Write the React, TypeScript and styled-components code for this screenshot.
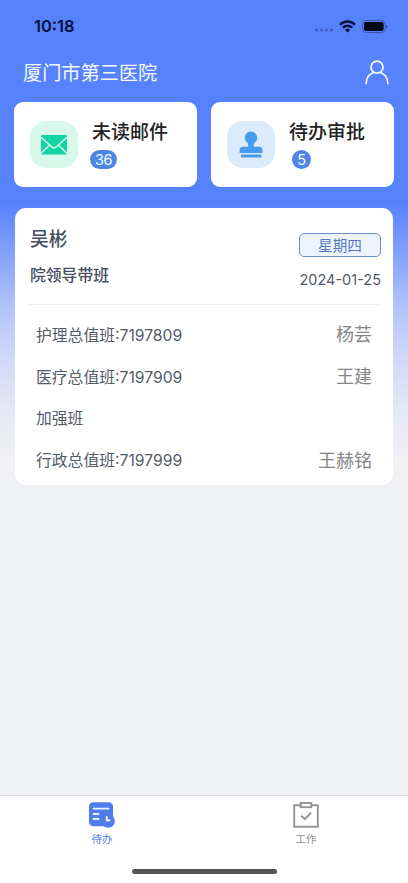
import React from "react";
import styled, { createGlobalStyle } from "styled-components";

const GlobalStyle = createGlobalStyle`
  * { box-sizing: border-box; }
  html, body { margin: 0; padding: 0; }
  body { font-family: Inter, "Noto Sans CJK SC", sans-serif; }
  h1, h2, p { margin: 0; font-weight: inherit; }
  svg { display: block; flex: none; }
`;

const Screen = styled.div`
  display: flex;
  flex-direction: column;
  width: 100%;
  height: 883px;
  overflow: hidden;
  white-space: nowrap;
  background: linear-gradient(
    180deg,
    #5682fd 0,
    #5682fd 203px,
    #7d9cfb 245px,
    #b0c2fa 305px,
    #d0daf8 360px,
    #e4e8f6 410px,
    #f0f1f5 460px
  );
`;

const StatusBar = styled.div`
  display: flex;
  align-items: center;
  justify-content: space-between;
  height: 52px;
  padding: 0 20px 0 34px;
`;

const Clock = styled.span`
  font-size: 16.5px;
  font-weight: 600;
  line-height: 20px;
  color: #08103d;
`;

const StatusIcons = styled.div`
  display: flex;
  align-items: center;
  gap: 6px;
`;

const Header = styled.header`
  display: flex;
  align-items: center;
  justify-content: space-between;
  height: 50px;
  padding: 0 18px 8px 23px;
`;

const HospitalName = styled.h1`
  font-size: 19.2px;
  line-height: 28px;
  color: #f4faff;
`;

const Shortcuts = styled.div`
  display: grid;
  grid-template-columns: 1fr 1fr;
  gap: 14px;
  height: 85px;
  margin: 0 14px;
`;

const ShortcutCard = styled.div`
  display: flex;
  align-items: flex-start;
  border-radius: 9px;
  background: #fff;
  padding: 19px 0 0 16px;
`;

const IconTile = styled.div<{ $bg: string }>`
  display: flex;
  align-items: center;
  justify-content: center;
  width: 48px;
  height: 47px;
  border-radius: 16px;
  background: ${(p) => p.$bg};
`;

const ShortcutText = styled.div`
  display: flex;
  flex-direction: column;
  align-items: flex-start;
  margin: -2px 0 0 12px;
`;

const ShortcutTitle = styled.h2`
  margin-left: 2px;
  font-size: 19px;
  font-weight: 500;
  line-height: 28px;
  color: #222;
`;

const Badge = styled.span<{ $shift?: number }>`
  min-width: 19px;
  height: 19px;
  margin: 3px 0 0 ${(p) => p.$shift ?? 0}px;
  padding: 0 5px;
  border-radius: 10px;
  background: #4f86e6;
  color: #f2fbff;
  font-size: 14.5px;
  line-height: 20px;
  letter-spacing: -0.4px;
  text-align: center;
`;

const DutyCard = styled.section`
  height: 277px;
  margin: 21px 15px 0;
  padding: 0 12px 0 13px;
  border-radius: 11px;
  background: #fff;
`;

const DutyHead = styled.div`
  display: flex;
  justify-content: space-between;
  height: 97px;
  padding: 0 0 0 2px;
  border-bottom: 1px solid #ebecee;
`;

const Leader = styled.div`
  padding-top: 18px;
  color: #454d60;
`;

const LeaderName = styled.h2`
  font-size: 18.8px;
  font-weight: 500;
  line-height: 28px;
`;

const LeaderRole = styled.p`
  margin-top: 10px;
  font-size: 15.8px;
  font-weight: 500;
  line-height: 24px;
`;

const DateColumn = styled.div`
  display: flex;
  flex-direction: column;
  align-items: flex-end;
  padding-top: 25px;
`;

const WeekTag = styled.span`
  width: 82px;
  height: 24px;
  border: 1px solid #6d8ccb;
  border-radius: 5px;
  background: #edf4ff;
  color: #5478c0;
  font-size: 14.6px;
  line-height: 24px;
  text-align: center;
`;

const DateText = styled.span`
  margin-top: 13px;
  font-size: 14.5px;
  line-height: 20px;
  color: #535a66;
`;

const DutyList = styled.div`
  padding-top: 10px;
`;

const DutyRow = styled.div`
  display: flex;
  align-items: center;
  justify-content: space-between;
  height: 41.8px;
  padding: 0 9px 0 8px;
  font-size: 15.8px;
  color: #535b68;
`;

const Shift = styled.span`
  display: flex;
  align-items: baseline;
  line-height: 24px;
`;

const Phone = styled.span`
  font-size: 15.7px;
`;

const Person = styled.span`
  font-size: 18px;
  line-height: 24px;
  padding-bottom: 1px;
  color: #858585;
`;

const Footer = styled.nav`
  display: grid;
  grid-template-columns: 1fr 1fr;
  grid-template-rows: 73px 6px;
  height: 88px;
  margin-top: auto;
  border-top: 1px solid #dcdde1;
  background: #fff;
`;

const Tab = styled.div<{ $active?: boolean }>`
  display: flex;
  flex-direction: column;
  align-items: center;
  gap: 4px;
  padding-top: 6px;
  color: ${(p) => (p.$active ? "#4f7ce6" : "#8e8e8e")};
  font-size: 10.5px;
  line-height: 16px;
`;

const HomeBar = styled.div`
  grid-column: 1 / 3;
  justify-self: center;
  width: 145px;
  height: 5px;
  border-radius: 3px;
  background: #555;
`;

const SignalIcon = () => (
  <svg width="18" height="18" viewBox="0 0 18 18" fill="#3c5bb8">
    {[1.6, 6.6, 11.6, 16.4].map((x) => (
      <circle key={x} cx={x} cy="13" r="1.4" />
    ))}
  </svg>
);

const WifiIcon = () => (
  <svg width="17" height="13" viewBox="0 0 17 13" fill="none" stroke="#07103f" strokeWidth="2.3">
    <path d="M1 4.7C5.2.4 11.8.4 16 4.7" />
    <path d="M3.8 7.7c2.6-2.6 6.8-2.6 9.4 0" />
    <path d="M5.9 9.7c1.5-1.4 3.7-1.4 5.2 0L8.5 12.5z" fill="#07103f" stroke="none" />
  </svg>
);

const BatteryIcon = () => (
  <svg width="26" height="13" viewBox="0 0 26 13">
    <rect x=".5" y=".5" width="22.6" height="12" rx="3.4" fill="none" stroke="#3958ad" />
    <rect x="2" y="2" width="19.6" height="9" rx="1.8" fill="#030617" />
    <path d="M24.2 4.7c1.6.5 1.6 3.1 0 3.6z" fill="#26418f" />
  </svg>
);

const UserIcon = () => (
  <svg width="26" height="26" viewBox="0 0 26 26" fill="none" stroke="#f5fbff" strokeWidth="1.7" strokeLinecap="round">
    <circle cx="13" cy="7.2" r="6" />
    <path d="M2.2 23.4c0-5.2 3-9.2 7.2-10.9M16.6 12.5c4.2 1.7 7.2 5.7 7.2 10.9" />
  </svg>
);

const MailIcon = () => (
  <svg width="26" height="20" viewBox="0 0 26 20">
    <rect x="0" y="0" width="26" height="19.4" rx="1.2" fill="#15d4a4" />
    <path
      d="M0 2.2 10.6 11.8q2.4 1.9 4.8 0L26 2.2M0 18.4 8.6 10M26 18.4 17.4 10"
      fill="none"
      stroke="#d0f7e9"
      strokeWidth="1.5"
    />
  </svg>
);

const StampIcon = () => (
  <svg width="24" height="27" viewBox="0 0 24 27" fill="#439cec">
    <path d="M12 .5a6.2 6.2 0 0 1 3.6 11.2c-1.1.9-1 2.7-.6 4.1h5.2c2.1 0 3.2 1.4 3.2 3.2v2.9H.6V19c0-1.8 1.1-3.2 3.2-3.2H9c.4-1.4.5-3.2-.6-4.1A6.2 6.2 0 0 1 12 .5z" />
    <rect x="2" y="23.5" width="20.5" height="2.9" rx=".4" />
  </svg>
);

const TodoIcon = () => (
  <svg width="26" height="26" viewBox="0 0 26 26">
    <rect x="0" y=".3" width="24" height="24" rx="4.2" fill="#4f7de9" />
    <circle cx="19.2" cy="19" r="6.7" fill="#4f7de9" />
    <path d="M4.5 6.6h15.2M4.5 12h5M4.5 17h5" stroke="#e7f1ff" strokeWidth="1.8" strokeLinecap="round" />
    <path d="M17.7 14.2v4.1h3.7" fill="none" stroke="#fff" strokeWidth="1.8" />
  </svg>
);

const WorkIcon = () => (
  <svg width="26" height="26" viewBox="0 0 26 26" fill="none" stroke="#949494" strokeWidth="1.9">
    <path d="M7.5 3.2H1.2v21.6h23.6V3.2h-6.3" />
    <rect x="7.7" y="1" width="10.6" height="4.2" />
    <path d="m8.2 13.8 3.7 3.4 6.2-6.6" />
  </svg>
);

const shifts = [
  { label: "护理总值班", phone: ":7197809", person: "杨芸" },
  { label: "医疗总值班", phone: ":7197909", person: "王建" },
  { label: "加强班", phone: "", person: "" },
  { label: "行政总值班", phone: ":7197999", person: "王赫铭" },
];

export default function App() {
  return (
    <>
      <GlobalStyle />
      <Screen>
        <StatusBar>
          <Clock>10:18</Clock>
          <StatusIcons>
            <SignalIcon />
            <WifiIcon />
            <BatteryIcon />
          </StatusIcons>
        </StatusBar>
        <Header>
          <HospitalName>厦门市第三医院</HospitalName>
          <UserIcon />
        </Header>
        <Shortcuts>
          <ShortcutCard>
            <IconTile $bg="#d8f8ec"><MailIcon /></IconTile>
            <ShortcutText>
              <ShortcutTitle>未读邮件</ShortcutTitle>
              <Badge>36</Badge>
            </ShortcutText>
          </ShortcutCard>
          <ShortcutCard>
            <IconTile $bg="#dcebfb"><StampIcon /></IconTile>
            <ShortcutText>
              <ShortcutTitle>待办审批</ShortcutTitle>
              <Badge $shift={5}>5</Badge>
            </ShortcutText>
          </ShortcutCard>
        </Shortcuts>
        <DutyCard>
          <DutyHead>
            <Leader>
              <LeaderName>吴彬</LeaderName>
              <LeaderRole>院领导带班</LeaderRole>
            </Leader>
            <DateColumn>
              <WeekTag>星期四</WeekTag>
              <DateText>2024-01-25</DateText>
            </DateColumn>
          </DutyHead>
          <DutyList>
            {shifts.map((s) => (
              <DutyRow key={s.label}>
                <Shift>
                  {s.label}
                  <Phone>{s.phone}</Phone>
                </Shift>
                <Person>{s.person}</Person>
              </DutyRow>
            ))}
          </DutyList>
        </DutyCard>
        <Footer>
          <Tab $active>
            <TodoIcon />
            待办
          </Tab>
          <Tab>
            <WorkIcon />
            工作
          </Tab>
          <HomeBar />
        </Footer>
      </Screen>
    </>
  );
}
